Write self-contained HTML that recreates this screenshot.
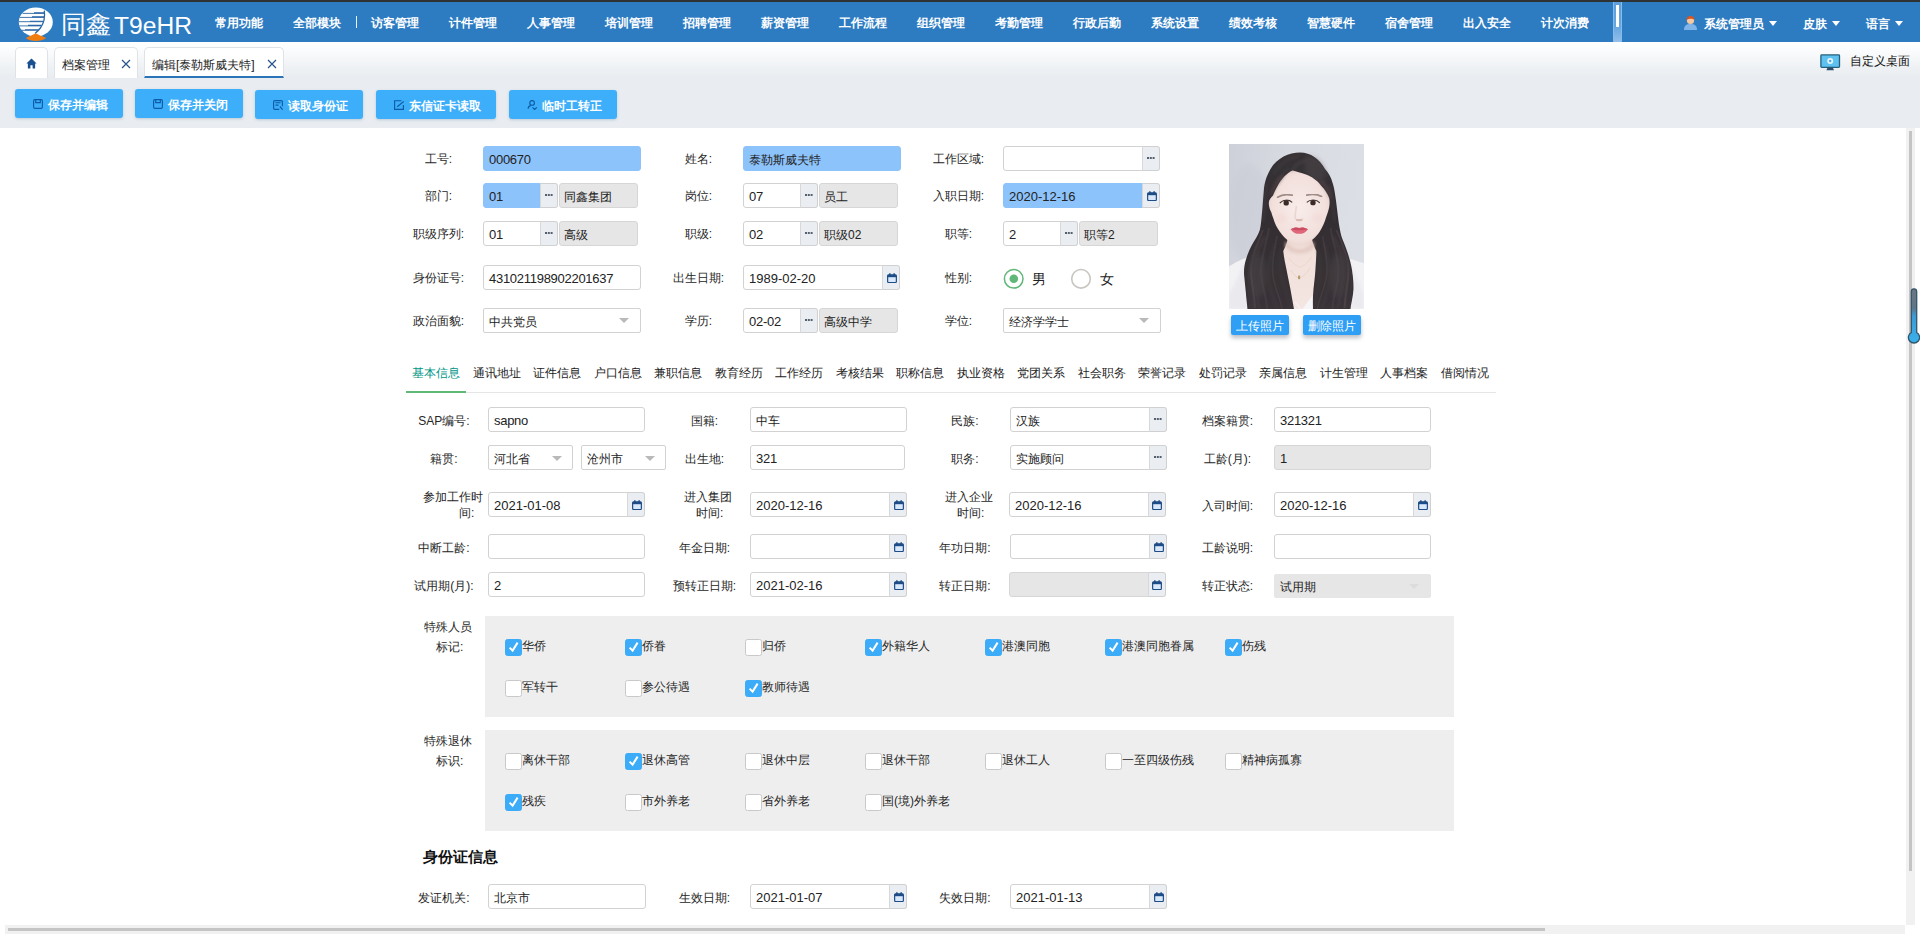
<!DOCTYPE html>
<html lang="zh"><head><meta charset="utf-8"><title>T9eHR</title>
<style>
*{box-sizing:border-box;margin:0;padding:0}
html,body{width:1920px;height:935px;overflow:hidden;background:#fff}
body{position:relative;font-family:"Liberation Sans",sans-serif;font-size:12px;color:#262626}
.a{position:absolute}
.t{position:absolute;white-space:nowrap;line-height:20px;height:20px}
.c{text-align:center}
.hdr{left:0;top:0;width:1920px;height:42px;background:#2d7cc2;border-top:2px solid #2e3232}
.nav{color:#fff;font-size:12px;font-weight:bold;top:12.5px;width:78px;text-align:center}
.strip{left:0;top:42px;width:1920px;height:86px;background:linear-gradient(#ffffff 0px,#fbfcfd 8px,#eef1f4 26px,#e9edf1 36px,#e9edf1 100%)}
.tab{top:47px;height:31px;background:#fff;border:1px solid #dfe3e7;border-bottom:none;border-radius:5px 5px 0 0}
.btn{height:29px;background:#3daef9;border-radius:3px;color:#fff;font-size:12px;font-weight:bold;box-shadow:0 1px 3px rgba(80,120,160,.3)}
.in{position:absolute;height:25px;border:1px solid #d2d2d2;border-radius:3px;background:#fff;font-size:12px;white-space:nowrap;overflow:hidden;color:#222}
.in span{position:absolute;left:5px;top:2px;line-height:21px;height:21px}
.blue{background:#8dc3fb;border-color:#8dc3fb}
.gray{background:#e6e6e6;border-color:#d6d6d6}
.pk{position:absolute;height:25px;width:18px;border:1px solid #d0d0d0;border-left:1px solid #d8d8d8;border-radius:0 3px 3px 0;background:#eaeef3}
.pk i{position:absolute;left:4px;top:10px;width:2px;height:2px;background:#55606c;box-shadow:2.8px 0 0 #55606c,5.6px 0 0 #55606c}
.cal{position:absolute;left:3.5px;top:7px;width:10px;height:10.4px}
.arr{position:absolute;width:0;height:0;border-left:5.5px solid transparent;border-right:5.5px solid transparent;border-top:5.5px solid #b9b9b9}
.n{font-size:13px;letter-spacing:-0.28px}
.d{font-size:13px}
.cb{position:absolute;width:17px;height:17px;border-radius:2.5px;background:#fff;border:1px solid #c9c9c9}
.cb.on{background:#3cacf8;border-color:#3cacf8}
.cb svg{position:absolute;left:1px;top:0px}
.panel{background:#eeeeee}
</style></head>
<body>
<div class="a hdr"></div>
<svg class="a" style="left:17px;top:5px" width="38" height="38" viewBox="0 0 38 38">
<defs><clipPath id="lg"><path d="M1.8 17.1 A17 14.5 0 0 1 27.4 5 C28.4 13 25 22 18 28.4 C10 34 1.8 27 1.8 17.1Z"/></clipPath></defs>
<path d="M18.6 28 L29 33 C25 37 12.5 37 9 33 Z" fill="#f07d10"/>
<ellipse cx="18.8" cy="17.1" rx="17" ry="14.5" fill="#fff"/>
<path d="M18.6 28.2 L28.6 33.2 C24 35 14 35 9.2 33.2 Z" fill="#f07d10"/>
<g clip-path="url(#lg)" stroke="#2a66a4" fill="none">
<path d="M0 8.4h30M0 12.4h30M0 16.7h30M0 20.9h30M0 25.3h30" stroke-width="0.9"/>
<path d="M17 7.9h13M15 11.9h15M13 16.2h15M11 20.4h15M8 24.8h15" stroke-width="1.1"/>
</g>
<path d="M27.3 5.6 C28.2 12 26.6 18.6 23.4 23 C21.8 25.2 20 26.8 18.2 28.2" fill="none" stroke="#2a66a4" stroke-width="1.3"/>
</svg>
<div class="t" style="left:60.5px;top:8px;height:32px;line-height:32px;font-size:25px;color:#fff">同鑫</div><div class="t" style="left:114px;top:9.5px;height:32px;line-height:32px;font-size:24.6px;color:#fff">T9eHR</div>
<div class="t nav" style="left:200px">常用功能</div>
<div class="t nav" style="left:278px">全部模块</div>
<div class="t nav" style="left:356px">访客管理</div>
<div class="t nav" style="left:434px">计件管理</div>
<div class="t nav" style="left:512px">人事管理</div>
<div class="t nav" style="left:590px">培训管理</div>
<div class="t nav" style="left:668px">招聘管理</div>
<div class="t nav" style="left:746px">薪资管理</div>
<div class="t nav" style="left:824px">工作流程</div>
<div class="t nav" style="left:902px">组织管理</div>
<div class="t nav" style="left:980px">考勤管理</div>
<div class="t nav" style="left:1058px">行政后勤</div>
<div class="t nav" style="left:1136px">系统设置</div>
<div class="t nav" style="left:1214px">绩效考核</div>
<div class="t nav" style="left:1292px">智慧硬件</div>
<div class="t nav" style="left:1370px">宿舍管理</div>
<div class="t nav" style="left:1448px">出入安全</div>
<div class="t nav" style="left:1526px">计次消费</div>
<div class="a" style="left:356px;top:16px;width:1px;height:12px;background:#e8f1fa"></div>
<div class="a" style="left:1613px;top:2px;width:9px;height:40px;background:linear-gradient(#5c9fdc,#65a6e0 60%,#94bfea);border-left:1px solid #86bbea;border-right:1px solid #86bbea"></div>
<div class="a" style="left:1616px;top:5px;width:3.4px;height:22px;background:#fff"></div>
<svg class="a" style="left:1683px;top:15px" width="15" height="16" viewBox="0 0 15 16">
<path d="M1 15 C1 10 4 9 7.5 9 C11 9 14 10 14 15 Z" fill="#7fb4ea"/>
<circle cx="7.5" cy="5.5" r="3.6" fill="#f7c9a0"/>
<path d="M3.6 5 C3.6 1.5 6 1 7.5 1 C9.5 1 11.6 2 11.4 5 C10 3.6 6 3.4 3.6 5Z" fill="#d9541e"/>
</svg>
<div class="t nav" style="left:1704px;width:60px;top:13.5px">系统管理员</div>
<div class="t nav" style="left:1803px;width:24px;top:13.5px">皮肤</div>
<div class="t nav" style="left:1866px;width:24px;top:13.5px">语言</div>
<div class="a" style="left:1769px;top:20.5px;width:0;height:0;border-left:4.5px solid transparent;border-right:4.5px solid transparent;border-top:5px solid #fff"></div>
<div class="a" style="left:1832px;top:20.5px;width:0;height:0;border-left:4.5px solid transparent;border-right:4.5px solid transparent;border-top:5px solid #fff"></div>
<div class="a" style="left:1895px;top:20.5px;width:0;height:0;border-left:4.5px solid transparent;border-right:4.5px solid transparent;border-top:5px solid #fff"></div>
<div class="a strip"></div>
<div class="a tab" style="left:15px;width:33px"></div>
<svg class="a" style="left:26px;top:58px" width="11" height="11" viewBox="0 0 13 12" preserveAspectRatio="none"><path d="M6.5 0.5 L12.5 6 H10.8 V11.5 H7.8 V8 H5.2 V11.5 H2.2 V6 H0.5 Z" fill="#1a4f92"/></svg>
<div class="a tab" style="left:54px;width:84px"></div>
<div class="t" style="left:62px;top:55px;color:#222">档案管理</div>
<div class="a tab" style="left:144px;width:140px;border-bottom:2px solid #2a74b8;height:31px"></div>
<div class="t" style="left:152px;top:55px;color:#222">编辑[泰勒斯威夫特]</div>
<svg class="a" style="left:121px;top:59px" width="10" height="10" viewBox="0 0 10 10"><path d="M1 1 L9 9 M9 1 L1 9" stroke="#28558f" stroke-width="1.2" fill="none"/></svg>
<svg class="a" style="left:267px;top:59px" width="10" height="10" viewBox="0 0 10 10"><path d="M1 1 L9 9 M9 1 L1 9" stroke="#28558f" stroke-width="1.2" fill="none"/></svg>
<svg class="a" style="left:1820px;top:54px" width="21" height="17" viewBox="0 0 21 17">
<rect x="0.9" y="0.9" width="18.6" height="12.4" rx="0.8" fill="#5ec1ef" stroke="#23607f" stroke-width="1.3"/>
<circle cx="10.2" cy="7" r="3" fill="#e4f5fd"/><circle cx="10.2" cy="7" r="1.2" fill="#4aa8d8"/>
<path d="M7.6 13.6 H12.8 L14 16.3 H6.4 Z" fill="#2f4c69"/>
</svg>
<div class="t" style="left:1850px;top:51px;color:#111">自定义桌面</div>
<div class="a btn" style="left:15px;top:88.5px;width:108px"></div>
<svg class="a" style="left:33.0px;top:99.0px" width="10" height="10" viewBox="0 0 10 10"><rect x=".6" y=".6" width="8.8" height="8.8" rx="1.3" fill="none" stroke="#0d5ca8" stroke-width="1.15"/><path d="M2.7 .6v3h4.6v-3" fill="none" stroke="#0d5ca8" stroke-width="1.15"/></svg>
<div class="t" style="left:48.0px;top:94.5px;color:#fff;font-weight:bold">保存并编辑</div>
<div class="a btn" style="left:135px;top:88.5px;width:108px"></div>
<svg class="a" style="left:153.0px;top:99.0px" width="10" height="10" viewBox="0 0 10 10"><rect x=".6" y=".6" width="8.8" height="8.8" rx="1.3" fill="none" stroke="#0d5ca8" stroke-width="1.15"/><path d="M2.7 .6v3h4.6v-3" fill="none" stroke="#0d5ca8" stroke-width="1.15"/></svg>
<div class="t" style="left:168.0px;top:94.5px;color:#fff;font-weight:bold">保存并关闭</div>
<div class="a btn" style="left:255px;top:89.5px;width:108px"></div>
<svg class="a" style="left:273.0px;top:100.0px" width="10" height="10" viewBox="0 0 10 10"><path d="M9.4 6.2V1.9a1.3 1.3 0 0 0-1.3-1.3H1.9A1.3 1.3 0 0 0 .6 1.9v6.2a1.3 1.3 0 0 0 1.3 1.3H6.2" fill="none" stroke="#0d5ca8" stroke-width="1.15"/><path d="M2.4 2.7h5.2M2.4 5.1h3.2" fill="none" stroke="#0d5ca8" stroke-width="1.15"/><path d="M6.9 6.5L9.7 9.7" fill="none" stroke="#0d5ca8" stroke-width="1.15" stroke-width="1.4"/></svg>
<div class="t" style="left:288.0px;top:95.5px;color:#fff;font-weight:bold">读取身份证</div>
<div class="a btn" style="left:376px;top:89.5px;width:120px"></div>
<svg class="a" style="left:394.0px;top:100.0px" width="10" height="10" viewBox="0 0 10 10"><path d="M7.4 .7H.6V9.4H9.4V5" fill="none" stroke="#0d5ca8" stroke-width="1.15"/><path d="M9.7 1.4L3.2 6.7" fill="none" stroke="#0d5ca8" stroke-width="1.15" stroke-width="1.3"/></svg>
<div class="t" style="left:409.0px;top:95.5px;color:#fff;font-weight:bold">东信证卡读取</div>
<div class="a btn" style="left:509px;top:89.5px;width:108px"></div>
<svg class="a" style="left:527.0px;top:100.0px" width="10" height="10" viewBox="0 0 10 10"><circle cx="5.1" cy="2.9" r="2.35" fill="none" stroke="#0d5ca8" stroke-width="1.15"/><path d="M1.1 8.8C1.1 6.9 2.3 6 3.7 5.6" fill="none" stroke="#0d5ca8" stroke-width="1.15"/><path d="M5.5 7.4L7.6 9.5L9.8 7.3" fill="none" stroke="#0d5ca8" stroke-width="1.15" stroke-width="1.3"/></svg>
<div class="t" style="left:542.0px;top:95.5px;color:#fff;font-weight:bold">临时工转正</div>
<div class="t c" style="left:378.5px;top:149px;width:120px">工号:</div>
<div class="in blue n" style="left:483px;top:146px;width:158px;"><span>000670</span></div>
<div class="t c" style="left:638.5px;top:149px;width:120px">姓名:</div>
<div class="in blue" style="left:743px;top:146px;width:158px;"><span style="top:3px;left:5px">泰勒斯威夫特</span></div>
<div class="t c" style="left:898.5px;top:149px;width:120px">工作区域:</div>
<div class="in " style="left:1003px;top:146px;width:140px;border-radius:3px 0 0 3px"></div><div class="pk" style="left:1142px;top:146px"><i></i></div>
<div class="t c" style="left:378.5px;top:186px;width:120px">部门:</div>
<div class="in blue n" style="left:483px;top:183px;width:58px;border-radius:3px 0 0 3px"><span>01</span></div><div class="pk" style="left:540px;top:183px"><i></i></div><div class="in gray" style="left:559px;top:183px;width:79px;"><span style="top:3px;left:4px">同鑫集团</span></div>
<div class="t c" style="left:638.5px;top:186px;width:120px">岗位:</div>
<div class="in  n" style="left:743px;top:183px;width:58px;border-radius:3px 0 0 3px"><span>07</span></div><div class="pk" style="left:800px;top:183px"><i></i></div><div class="in gray" style="left:819px;top:183px;width:79px;"><span style="top:3px;left:4px">员工</span></div>
<div class="t c" style="left:898.5px;top:186px;width:120px">入职日期:</div>
<div class="in blue d" style="left:1003px;top:183px;width:140px;border-radius:3px 0 0 3px"><span>2020-12-16</span></div><div class="pk" style="left:1142px;top:183px"><svg class="cal" viewBox="0 0 11 11"><rect x="0.7" y="1.8" width="9.6" height="8.5" rx="1.2" fill="#d9e9fb" stroke="#1d4c86" stroke-width="1.3"/><rect x="0.7" y="1.8" width="9.6" height="2.6" fill="#1d4c86"/><rect x="2.4" y="0" width="1.5" height="2.4" fill="#1d4c86"/><rect x="7.1" y="0" width="1.5" height="2.4" fill="#1d4c86"/></svg></div>
<div class="t c" style="left:378.5px;top:224px;width:120px">职级序列:</div>
<div class="in  n" style="left:483px;top:221px;width:58px;border-radius:3px 0 0 3px"><span>01</span></div><div class="pk" style="left:540px;top:221px"><i></i></div><div class="in gray" style="left:559px;top:221px;width:79px;"><span style="top:3px;left:4px">高级</span></div>
<div class="t c" style="left:638.5px;top:224px;width:120px">职级:</div>
<div class="in  n" style="left:743px;top:221px;width:58px;border-radius:3px 0 0 3px"><span>02</span></div><div class="pk" style="left:800px;top:221px"><i></i></div><div class="in gray" style="left:819px;top:221px;width:79px;"><span style="top:3px;left:4px">职级02</span></div>
<div class="t c" style="left:898.5px;top:224px;width:120px">职等:</div>
<div class="in  n" style="left:1003px;top:221px;width:58px;border-radius:3px 0 0 3px"><span>2</span></div><div class="pk" style="left:1060px;top:221px"><i></i></div><div class="in gray" style="left:1079px;top:221px;width:79px;"><span style="top:3px;left:4px">职等2</span></div>
<div class="t c" style="left:378.5px;top:268px;width:120px">身份证号:</div>
<div class="in  n" style="left:483px;top:265px;width:158px;"><span>431021198902201637</span></div>
<div class="t c" style="left:638.5px;top:268px;width:120px">出生日期:</div>
<div class="in  d" style="left:743px;top:265px;width:140px;border-radius:3px 0 0 3px"><span>1989-02-20</span></div><div class="pk" style="left:882px;top:265px"><svg class="cal" viewBox="0 0 11 11"><rect x="0.7" y="1.8" width="9.6" height="8.5" rx="1.2" fill="#d9e9fb" stroke="#1d4c86" stroke-width="1.3"/><rect x="0.7" y="1.8" width="9.6" height="2.6" fill="#1d4c86"/><rect x="2.4" y="0" width="1.5" height="2.4" fill="#1d4c86"/><rect x="7.1" y="0" width="1.5" height="2.4" fill="#1d4c86"/></svg></div>
<div class="t c" style="left:898.5px;top:268px;width:120px">性别:</div>
<svg class="a" style="left:1000px;top:265px" width="120" height="28" viewBox="0 0 120 28"><circle cx="13.7" cy="13.8" r="9.3" fill="#fff" stroke="#5fb878" stroke-width="1.5"/><circle cx="13.8" cy="13.8" r="4.3" fill="#5fb878"/><circle cx="81" cy="13.8" r="9.3" fill="#fff" stroke="#c9c6c1" stroke-width="1.6"/></svg>
<div class="t" style="left:1032px;top:269px;font-size:14px;color:#222">男</div>
<div class="t" style="left:1100px;top:269px;font-size:14px;color:#222">女</div>
<div class="t c" style="left:378.5px;top:311px;width:120px">政治面貌:</div>
<div class="in " style="left:483px;top:308px;width:158px;border-radius:2px;"><span style="top:3px;left:5px">中共党员</span></div><div class="arr" style="left:619px;top:318px;border-top-color:#b9b9b9"></div>
<div class="t c" style="left:638.5px;top:311px;width:120px">学历:</div>
<div class="in  n" style="left:743px;top:308px;width:58px;border-radius:3px 0 0 3px"><span>02-02</span></div><div class="pk" style="left:800px;top:308px"><i></i></div><div class="in gray" style="left:819px;top:308px;width:79px;"><span style="top:3px;left:4px">高级中学</span></div>
<div class="t c" style="left:898.5px;top:311px;width:120px">学位:</div>
<div class="in " style="left:1003px;top:308px;width:158px;border-radius:2px;"><span style="top:3px;left:5px">经济学学士</span></div><div class="arr" style="left:1139px;top:318px;border-top-color:#b9b9b9"></div>
<svg class="a" style="left:1229px;top:144px" width="135" height="165" viewBox="0 0 135 165">
<defs>
<linearGradient id="pbg" x1="0" y1="0" x2="1" y2="0.25"><stop offset="0" stop-color="#cdd0d9"/><stop offset="0.45" stop-color="#d9dbe2"/><stop offset="1" stop-color="#dddfe6"/></linearGradient>
<radialGradient id="face" cx="0.5" cy="0.5" r="0.62"><stop offset="0" stop-color="#f8ecea"/><stop offset="0.7" stop-color="#f2e0dc"/><stop offset="1" stop-color="#e3c9c3"/></radialGradient>
<linearGradient id="hair" x1="0" y1="0" x2="0" y2="1"><stop offset="0" stop-color="#373135"/><stop offset="0.45" stop-color="#332d31"/><stop offset="1" stop-color="#3a3438"/></linearGradient>
<linearGradient id="chest" x1="0" y1="0" x2="0" y2="1"><stop offset="0" stop-color="#e6cdc6"/><stop offset="0.18" stop-color="#f1dfda"/><stop offset="1" stop-color="#f4e6e2"/></linearGradient>
<filter id="b1" x="-10%" y="-10%" width="120%" height="120%"><feGaussianBlur stdDeviation="0.7"/></filter>
<filter id="b2" x="-20%" y="-20%" width="140%" height="140%"><feGaussianBlur stdDeviation="1.4"/></filter>
<filter id="b3" x="-30%" y="-30%" width="160%" height="160%"><feGaussianBlur stdDeviation="2.5"/></filter>
<clipPath id="pc"><rect width="135" height="165"/></clipPath>
</defs>
<g clip-path="url(#pc)">
<rect width="135" height="165" fill="url(#pbg)"/>
<ellipse cx="20" cy="70" rx="22" ry="50" fill="#c9ccd6" opacity=".5" filter="url(#b3)"/>
<!-- clothes -->
<path d="M-2 124 C6 118 14 114.5 24 112 L112 113 C120 114.5 128 116.5 137 120 V167 H-2Z" fill="#f2f1f4" filter="url(#b1)"/>
<path d="M0 150 C6 140 10 130 16 118 L20 140 L18 165 H0Z" fill="#e4e3ea" opacity=".55" filter="url(#b2)"/>
<path d="M135 150 C130 140 126 130 122 120 L120 140 L122 165 H135Z" fill="#e4e3ea" opacity=".45" filter="url(#b2)"/>
<!-- hair mass -->
<path d="M71 8.6 C60 8.6 48 14 41.5 25 C37 33 35.4 39 34.8 47 C34 56 33.6 64 32.6 73 C32 79 31.6 83 30.8 86 C29 91 27 94 24.6 98 C21 104 18.6 110 16.8 116 C15 122 14.6 128 15.4 134 C16 140 16.4 144 16.8 148 C17.2 154 18 159 18.6 167 H121 C122 160 124 153 124.4 146 C124.8 139 123.8 132 123 126 C122.4 122 121.6 119 120.8 116 C119 109 116.6 103 114.2 97 C112.6 93 111.6 90 111 86 C110.2 82 109.6 78 109 73 C108 65 107.4 59 106.6 54 C105.8 48 105 43 103.6 39 C102 33 99.6 29 96 25 C90 15 82 8.6 71 8.6Z" fill="url(#hair)" filter="url(#b1)"/>
<ellipse cx="86" cy="26" rx="9" ry="14" fill="#5a5257" opacity=".35" transform="rotate(-28 86 26)" filter="url(#b3)"/>
<ellipse cx="30" cy="132" rx="7" ry="22" fill="#554d52" opacity=".35" filter="url(#b3)"/>
<ellipse cx="108" cy="132" rx="7" ry="22" fill="#554d52" opacity=".35" filter="url(#b3)"/>
<!-- chest / neck -->
<path d="M59.5 90 C58.6 96 57.4 101.5 54.2 107 C55 114 56.4 120 57.6 126 C58.8 132 60.2 139 61.4 145 C62.6 152 64 159 65.3 167 H83 C83.4 160 84 152 84.5 145 C85.2 139 86 132 86.4 126 C86.8 120 87.4 112 87.4 107 C84.4 101.5 83 96 82 90Z" fill="url(#chest)" filter="url(#b1)"/>
<!-- collar V -->
<path d="M83.6 151.5 L72.6 166 H84Z" fill="#f6f5f7" filter="url(#b1)"/>
<path d="M66 158 L73 166" stroke="#f6f5f7" stroke-width="1" filter="url(#b1)"/>
<!-- face -->
<path d="M63.5 26.5 C58 29 52 35 48.6 42 C46.4 46 45 49 44 51.5 C41.6 54 39.6 56 39.8 59.5 C40 63 41 66 42.4 68.5 C43 71 43.6 72 44.2 74 C45.6 79 48 84 51 88 C53.4 91.4 55.4 93.6 57.8 95.6 C61.4 98.8 65.6 101.4 70.4 101.4 C75.4 101.4 80 98.6 83.6 95.6 C86.4 93 88.8 90.4 90.8 87.4 C93.6 83 95.8 78 97 73.4 C98 70.6 99.4 67 100.2 63 C100.8 60 100.8 57 100.2 54 C98.4 49.6 96 45.6 92.4 42 C88 36 82 32.4 77 30.6 C72 28.8 67 27.4 63.5 26.5Z" fill="url(#face)" filter="url(#b1)"/>
<!-- under-chin shadow -->
<path d="M56.5 97 C61 102.5 66 105 70.5 105 C75.5 105 80.5 102.5 84.8 97 L85.6 103 C81 108 76 109.6 70.5 109.6 C65 109.6 60 107.6 55.6 102.6Z" fill="#dfc3bb" opacity=".7" filter="url(#b2)"/>
<!-- hair shadow on forehead sides -->
<path d="M44 51 C46.5 45 50 38 56 32 L52 31 C46 36 42 44 40.5 52Z" fill="#6a585a" opacity=".35" filter="url(#b2)"/>
<path d="M100 54 C98 48 95 43 90 38 L94 36.5 C99 41 102 47 103.4 54Z" fill="#6a585a" opacity=".35" filter="url(#b2)"/>
<!-- cheek blush -->
<ellipse cx="52.5" cy="74" rx="5.5" ry="4.5" fill="#f2cfcf" opacity=".28" filter="url(#b2)"/>
<ellipse cx="88" cy="74" rx="5.5" ry="4.5" fill="#f2cfcf" opacity=".28" filter="url(#b2)"/>
<!-- eyebrows -->
<path d="M48.6 53.2 C52.4 50.6 58 50 63.2 51.2" stroke="#7d6762" stroke-width="1.7" fill="none" stroke-linecap="round" opacity=".7" filter="url(#b1)"/>
<path d="M77.8 51.2 C83 50 88.6 50.4 92.6 52.6" stroke="#7d6762" stroke-width="1.7" fill="none" stroke-linecap="round" opacity=".7" filter="url(#b1)"/>
<!-- eyes -->
<path d="M51.4 59.4 C53.6 56.2 59.6 55.8 62.6 58.8 C60 62 54.2 62.2 51.4 59.4Z" fill="#f3ebea" filter="url(#b1)"/>
<path d="M78.4 58.8 C81.2 55.6 87.4 55.8 90 59 C87 62 81.2 62 78.4 58.8Z" fill="#f3ebea" filter="url(#b1)"/>
<ellipse cx="57.2" cy="58.9" rx="2.7" ry="2.6" fill="#3b2926" filter="url(#b1)"/>
<ellipse cx="84" cy="58.7" rx="2.7" ry="2.6" fill="#3b2926" filter="url(#b1)"/>
<path d="M50.8 59.2 C53.6 55.4 60 55.2 63.2 58.4" stroke="#33221f" stroke-width="1.1" fill="none" opacity=".9" filter="url(#b1)"/>
<path d="M77.8 58.4 C81 55 87.6 55.2 90.8 58.8" stroke="#33221f" stroke-width="1.1" fill="none" opacity=".9" filter="url(#b1)"/>
<!-- nose -->
<path d="M67.4 62 C66.6 68 65.8 71.6 66.2 74.4 C67.6 76.6 72.8 76.6 74 74.4" stroke="#e3c6bf" stroke-width="1.6" fill="none" opacity=".55" filter="url(#b1)"/>
<ellipse cx="70.2" cy="76.2" rx="3.4" ry="1.1" fill="#c9a097" opacity=".55" filter="url(#b1)"/>
<!-- lips -->
<path d="M61.6 85.2 C64.8 83.4 68 83 70.2 84 C72.4 83 75.6 83.4 79 85.2 C76.4 88.8 73.6 89.8 70.2 89.8 C66.8 89.8 64.2 88.8 61.6 85.2Z" fill="#e0667a" filter="url(#b1)"/>
<path d="M61.6 85.2 C64.8 83.4 68 83 70.2 84 C72.4 83 75.6 83.4 79 85.2 C75.6 86 73 86.2 70.2 86.2 C67.4 86.2 65 86 61.6 85.2Z" fill="#c4485c" opacity=".8" filter="url(#b1)"/>
<!-- hair highlights -->
<path d="M63 27 C66 21 72 17 80 15" stroke="#5b5257" stroke-width="1.6" fill="none" opacity=".55" filter="url(#b2)"/>
<path d="M60 24 C56 28 52 33 49 39" stroke="#4c4448" stroke-width="1.6" fill="none" opacity=".5" filter="url(#b2)"/>
<path d="M36 92 C30 104 24 116 24 130 C24 142 28 152 30 164" stroke="#4d4549" stroke-width="2.4" fill="none" opacity=".55" filter="url(#b2)"/>
<path d="M46 100 C42 112 38 124 40 138 C41 148 46 156 48 165" stroke="#484045" stroke-width="2" fill="none" opacity=".5" filter="url(#b2)"/>
<path d="M104 92 C110 104 115 116 115 130 C115 142 111 152 109 164" stroke="#4d4549" stroke-width="2.4" fill="none" opacity=".55" filter="url(#b2)"/>
<path d="M95 100 C99 112 102 124 100 138 C99 148 95 156 93 165" stroke="#484045" stroke-width="2" fill="none" opacity=".5" filter="url(#b2)"/>
<path d="M28 100 C24 110 20 120 21 132 C22 140 24 150 24 164" stroke="#5a5156" stroke-width="1.6" fill="none" opacity=".45" filter="url(#b2)"/>
<path d="M52 104 C50 116 50 126 54 138 C57 148 60 156 61 165" stroke="#3f373b" stroke-width="2.4" fill="none" opacity=".6" filter="url(#b2)"/>
<path d="M112 100 C116 110 119 120 119 132 C118 142 116 152 116 164" stroke="#5a5156" stroke-width="1.6" fill="none" opacity=".45" filter="url(#b2)"/>
<path d="M89 104 C91 116 92 126 90 138 C88 148 86 156 86 165" stroke="#3f373b" stroke-width="2.4" fill="none" opacity=".6" filter="url(#b2)"/>
<path d="M38 40 C36 52 36 64 34 78" stroke="#4a4246" stroke-width="1.8" fill="none" opacity=".5" filter="url(#b2)"/>
<path d="M101 40 C103 52 104 64 106 78" stroke="#4a4246" stroke-width="1.8" fill="none" opacity=".5" filter="url(#b2)"/>
<path d="M70 12 C60 14 50 20 45 30" stroke="#4f474c" stroke-width="1.4" fill="none" opacity=".45" filter="url(#b2)"/>
<path d="M76 12 C86 15 94 22 98 32" stroke="#4f474c" stroke-width="1.4" fill="none" opacity=".45" filter="url(#b2)"/>
<path d="M70 17 C78 18 88 24 93 34" stroke="#453d42" stroke-width="1.6" fill="none" opacity=".5" filter="url(#b2)"/>
<path d="M34 86 C30 96 24 108 22 122 C21 134 25 146 26 164" stroke="#5c5459" stroke-width="1.8" fill="none" opacity="0.38" filter="url(#b1)"/>
<path d="M107.5 86 C111.5 96 117.5 108 119.5 122 C120.5 134 116.5 146 115.5 164" stroke="#5c5459" stroke-width="1.8" fill="none" opacity="0.38" filter="url(#b1)"/>
<path d="M40 84 C38 98 32 112 32 128 C32 142 38 152 38 165" stroke="#4f474c" stroke-width="2.2" fill="none" opacity="0.42" filter="url(#b1)"/>
<path d="M101.5 84 C103.5 98 109.5 112 109.5 128 C109.5 142 103.5 152 103.5 165" stroke="#4f474c" stroke-width="2.2" fill="none" opacity="0.42" filter="url(#b1)"/>
<path d="M48 92 C46 104 42 118 44 132 C46 146 52 156 53 165" stroke="#564e53" stroke-width="1.6" fill="none" opacity="0.36" filter="url(#b1)"/>
<path d="M93.5 92 C95.5 104 99.5 118 97.5 132 C95.5 146 89.5 156 88.5 165" stroke="#564e53" stroke-width="1.6" fill="none" opacity="0.36" filter="url(#b1)"/>
<path d="M29 100 C25 110 19 122 19 136 C19 146 21 156 21 165" stroke="#3f373c" stroke-width="2.0" fill="none" opacity="0.5" filter="url(#b1)"/>
<path d="M112.5 100 C116.5 110 122.5 122 122.5 136 C122.5 146 120.5 156 120.5 165" stroke="#3f373c" stroke-width="2.0" fill="none" opacity="0.5" filter="url(#b1)"/>
<!-- necklace -->
<path d="M60 114 C64 120 68 122.5 70.6 123 C74 122.5 78 120 82.6 113" stroke="#e6cdb8" stroke-width=".6" fill="none" opacity=".8"/>
<path d="M61.6 126 C65 131 68 133.6 70 134.4 C73 133.6 77 130 81.4 124" stroke="#e2c6ae" stroke-width=".6" fill="none" opacity=".8"/>
<rect x="69" y="131.6" width="2.2" height="3.6" rx=".8" fill="#b89b6e" filter="url(#b1)"/>
</g>
</svg>
<div class="a" style="left:1231px;top:315px;width:58px;height:20px;background:#2f9ff6;border-radius:2px;box-shadow:0 3px 4px rgba(60,70,90,.35)"></div>
<div class="t c" style="left:1231px;top:316px;width:58px;color:#fff;font-size:12px">上传照片</div>
<div class="a" style="left:1303px;top:315px;width:58px;height:20px;background:#2f9ff6;border-radius:2px;box-shadow:0 3px 4px rgba(60,70,90,.35)"></div>
<div class="t c" style="left:1303px;top:316px;width:58px;color:#fff;font-size:12px">删除照片</div>
<div class="t" style="left:412.0px;top:362.5px;color:#009688">基本信息</div>
<div class="t" style="left:472.5px;top:362.5px;color:#222">通讯地址</div>
<div class="t" style="left:533.0px;top:362.5px;color:#222">证件信息</div>
<div class="t" style="left:593.5px;top:362.5px;color:#222">户口信息</div>
<div class="t" style="left:654.0px;top:362.5px;color:#222">兼职信息</div>
<div class="t" style="left:714.5px;top:362.5px;color:#222">教育经历</div>
<div class="t" style="left:775.0px;top:362.5px;color:#222">工作经历</div>
<div class="t" style="left:835.5px;top:362.5px;color:#222">考核结果</div>
<div class="t" style="left:896.0px;top:362.5px;color:#222">职称信息</div>
<div class="t" style="left:956.5px;top:362.5px;color:#222">执业资格</div>
<div class="t" style="left:1017.0px;top:362.5px;color:#222">党团关系</div>
<div class="t" style="left:1077.5px;top:362.5px;color:#222">社会职务</div>
<div class="t" style="left:1138.0px;top:362.5px;color:#222">荣誉记录</div>
<div class="t" style="left:1198.5px;top:362.5px;color:#222">处罚记录</div>
<div class="t" style="left:1259.0px;top:362.5px;color:#222">亲属信息</div>
<div class="t" style="left:1319.5px;top:362.5px;color:#222">计生管理</div>
<div class="t" style="left:1380.0px;top:362.5px;color:#222">人事档案</div>
<div class="t" style="left:1440.5px;top:362.5px;color:#222">借阅情况</div>
<div class="a" style="left:406px;top:392px;width:1090px;height:1px;background:#e6e6e6"></div>
<div class="a" style="left:406px;top:391px;width:60px;height:2px;background:#5fb878"></div>
<div class="t c" style="left:384.0px;top:411px;width:120px">SAP编号:</div>
<div class="in  n" style="left:488px;top:407px;width:157px;"><span>sapno</span></div>
<div class="t c" style="left:644.5px;top:411px;width:120px">国籍:</div>
<div class="in " style="left:750px;top:407px;width:157px;"><span style="top:3px;left:5px">中车</span></div>
<div class="t c" style="left:905.0px;top:411px;width:120px">民族:</div>
<div class="in " style="left:1010px;top:407px;width:140px;border-radius:3px 0 0 3px"><span style="top:3px;left:5px">汉族</span></div><div class="pk" style="left:1149px;top:407px"><i></i></div>
<div class="t c" style="left:1167.5px;top:411px;width:120px">档案籍贯:</div>
<div class="in  n" style="left:1274px;top:407px;width:157px;"><span>321321</span></div>
<div class="t c" style="left:384.0px;top:449px;width:120px">籍贯:</div>
<div class="in " style="left:488px;top:445px;width:85px;border-radius:2px;"><span style="top:3px;left:5px">河北省</span></div><div class="arr" style="left:552px;top:456.4px;border-top-color:#b9b9b9"></div>
<div class="in " style="left:581px;top:445px;width:85px;border-radius:2px;"><span style="top:3px;left:5px">沧州市</span></div><div class="arr" style="left:645px;top:456.4px;border-top-color:#b9b9b9"></div>
<div class="t c" style="left:644.5px;top:449px;width:120px">出生地:</div>
<div class="in  n" style="left:750px;top:445px;width:155px;"><span>321</span></div>
<div class="t c" style="left:905.0px;top:449px;width:120px">职务:</div>
<div class="in " style="left:1010px;top:445px;width:140px;border-radius:3px 0 0 3px"><span style="top:3px;left:5px">实施顾问</span></div><div class="pk" style="left:1149px;top:445px"><i></i></div>
<div class="t c" style="left:1167.5px;top:449px;width:120px">工龄(月):</div>
<div class="in gray n" style="left:1274px;top:445px;width:157px;"><span>1</span></div>
<div class="t" style="left:423px;top:489px;line-height:16px;height:16px">参加工作时</div><div class="t" style="left:459px;top:505px;line-height:16px;height:16px">间:</div>
<div class="in  d" style="left:488px;top:492px;width:140px;border-radius:3px 0 0 3px"><span>2021-01-08</span></div><div class="pk" style="left:627px;top:492px"><svg class="cal" viewBox="0 0 11 11"><rect x="0.7" y="1.8" width="9.6" height="8.5" rx="1.2" fill="#d9e9fb" stroke="#1d4c86" stroke-width="1.3"/><rect x="0.7" y="1.8" width="9.6" height="2.6" fill="#1d4c86"/><rect x="2.4" y="0" width="1.5" height="2.4" fill="#1d4c86"/><rect x="7.1" y="0" width="1.5" height="2.4" fill="#1d4c86"/></svg></div>
<div class="t" style="left:684px;top:489px;line-height:16px;height:16px">进入集团</div><div class="t" style="left:696px;top:505px;line-height:16px;height:16px">时间:</div>
<div class="in  d" style="left:750px;top:492px;width:140px;border-radius:3px 0 0 3px"><span>2020-12-16</span></div><div class="pk" style="left:889px;top:492px"><svg class="cal" viewBox="0 0 11 11"><rect x="0.7" y="1.8" width="9.6" height="8.5" rx="1.2" fill="#d9e9fb" stroke="#1d4c86" stroke-width="1.3"/><rect x="0.7" y="1.8" width="9.6" height="2.6" fill="#1d4c86"/><rect x="2.4" y="0" width="1.5" height="2.4" fill="#1d4c86"/><rect x="7.1" y="0" width="1.5" height="2.4" fill="#1d4c86"/></svg></div>
<div class="t" style="left:945px;top:489px;line-height:16px;height:16px">进入企业</div><div class="t" style="left:957px;top:505px;line-height:16px;height:16px">时间:</div>
<div class="in  d" style="left:1009px;top:492px;width:139.5px;border-radius:3px 0 0 3px"><span>2020-12-16</span></div><div class="pk" style="left:1147.5px;top:492px"><svg class="cal" viewBox="0 0 11 11"><rect x="0.7" y="1.8" width="9.6" height="8.5" rx="1.2" fill="#d9e9fb" stroke="#1d4c86" stroke-width="1.3"/><rect x="0.7" y="1.8" width="9.6" height="2.6" fill="#1d4c86"/><rect x="2.4" y="0" width="1.5" height="2.4" fill="#1d4c86"/><rect x="7.1" y="0" width="1.5" height="2.4" fill="#1d4c86"/></svg></div>
<div class="t c" style="left:1167.5px;top:496px;width:120px">入司时间:</div>
<div class="in  d" style="left:1274px;top:492px;width:140px;border-radius:3px 0 0 3px"><span>2020-12-16</span></div><div class="pk" style="left:1413px;top:492px"><svg class="cal" viewBox="0 0 11 11"><rect x="0.7" y="1.8" width="9.6" height="8.5" rx="1.2" fill="#d9e9fb" stroke="#1d4c86" stroke-width="1.3"/><rect x="0.7" y="1.8" width="9.6" height="2.6" fill="#1d4c86"/><rect x="2.4" y="0" width="1.5" height="2.4" fill="#1d4c86"/><rect x="7.1" y="0" width="1.5" height="2.4" fill="#1d4c86"/></svg></div>
<div class="t c" style="left:384.0px;top:538px;width:120px">中断工龄:</div>
<div class="in " style="left:488px;top:534px;width:157px;"></div>
<div class="t c" style="left:644.5px;top:538px;width:120px">年金日期:</div>
<div class="in " style="left:750px;top:534px;width:140px;border-radius:3px 0 0 3px"></div><div class="pk" style="left:889px;top:534px"><svg class="cal" viewBox="0 0 11 11"><rect x="0.7" y="1.8" width="9.6" height="8.5" rx="1.2" fill="#d9e9fb" stroke="#1d4c86" stroke-width="1.3"/><rect x="0.7" y="1.8" width="9.6" height="2.6" fill="#1d4c86"/><rect x="2.4" y="0" width="1.5" height="2.4" fill="#1d4c86"/><rect x="7.1" y="0" width="1.5" height="2.4" fill="#1d4c86"/></svg></div>
<div class="t c" style="left:905.0px;top:538px;width:120px">年功日期:</div>
<div class="in " style="left:1010px;top:534px;width:140px;border-radius:3px 0 0 3px"></div><div class="pk" style="left:1149px;top:534px"><svg class="cal" viewBox="0 0 11 11"><rect x="0.7" y="1.8" width="9.6" height="8.5" rx="1.2" fill="#d9e9fb" stroke="#1d4c86" stroke-width="1.3"/><rect x="0.7" y="1.8" width="9.6" height="2.6" fill="#1d4c86"/><rect x="2.4" y="0" width="1.5" height="2.4" fill="#1d4c86"/><rect x="7.1" y="0" width="1.5" height="2.4" fill="#1d4c86"/></svg></div>
<div class="t c" style="left:1167.5px;top:538px;width:120px">工龄说明:</div>
<div class="in " style="left:1274px;top:534px;width:157px;"></div>
<div class="t c" style="left:384.0px;top:576px;width:120px">试用期(月):</div>
<div class="in  n" style="left:488px;top:572px;width:157px;"><span>2</span></div>
<div class="t c" style="left:644.5px;top:576px;width:120px">预转正日期:</div>
<div class="in  d" style="left:750px;top:572px;width:140px;border-radius:3px 0 0 3px"><span>2021-02-16</span></div><div class="pk" style="left:889px;top:572px"><svg class="cal" viewBox="0 0 11 11"><rect x="0.7" y="1.8" width="9.6" height="8.5" rx="1.2" fill="#d9e9fb" stroke="#1d4c86" stroke-width="1.3"/><rect x="0.7" y="1.8" width="9.6" height="2.6" fill="#1d4c86"/><rect x="2.4" y="0" width="1.5" height="2.4" fill="#1d4c86"/><rect x="7.1" y="0" width="1.5" height="2.4" fill="#1d4c86"/></svg></div>
<div class="t c" style="left:905.0px;top:576px;width:120px">转正日期:</div>
<div class="in gray" style="left:1009px;top:572px;width:139.5px;border-radius:3px 0 0 3px"></div><div class="pk" style="left:1147.5px;top:572px"><svg class="cal" viewBox="0 0 11 11"><rect x="0.7" y="1.8" width="9.6" height="8.5" rx="1.2" fill="#d9e9fb" stroke="#1d4c86" stroke-width="1.3"/><rect x="0.7" y="1.8" width="9.6" height="2.6" fill="#1d4c86"/><rect x="2.4" y="0" width="1.5" height="2.4" fill="#1d4c86"/><rect x="7.1" y="0" width="1.5" height="2.4" fill="#1d4c86"/></svg></div>
<div class="t c" style="left:1167.5px;top:576px;width:120px">转正状态:</div>
<div class="in gray" style="left:1274px;top:574px;width:157px;border-radius:2px;border-color:#e6e6e6;height:24px;"><span>试用期</span></div><div class="arr" style="left:1409px;top:584px;border-top-color:#dcdcdc"></div>
<div class="a panel" style="left:485px;top:616px;width:969px;height:100.5px"></div>
<div class="t" style="left:424px;top:617px">特殊人员</div><div class="t" style="left:436px;top:637px">标记:</div>
<div class="cb on" style="left:505px;top:639px"><svg width="13" height="13" viewBox="0 0 13 13"><path d="M2.6 7.6 L5.6 10.6 L10.6 2.6" fill="none" stroke="#fff" stroke-width="2"/></svg></div><div class="t" style="left:522px;top:636px">华侨</div>
<div class="cb on" style="left:625px;top:639px"><svg width="13" height="13" viewBox="0 0 13 13"><path d="M2.6 7.6 L5.6 10.6 L10.6 2.6" fill="none" stroke="#fff" stroke-width="2"/></svg></div><div class="t" style="left:642px;top:636px">侨眷</div>
<div class="cb" style="left:745px;top:639px"></div><div class="t" style="left:762px;top:636px">归侨</div>
<div class="cb on" style="left:865px;top:639px"><svg width="13" height="13" viewBox="0 0 13 13"><path d="M2.6 7.6 L5.6 10.6 L10.6 2.6" fill="none" stroke="#fff" stroke-width="2"/></svg></div><div class="t" style="left:882px;top:636px">外籍华人</div>
<div class="cb on" style="left:985px;top:639px"><svg width="13" height="13" viewBox="0 0 13 13"><path d="M2.6 7.6 L5.6 10.6 L10.6 2.6" fill="none" stroke="#fff" stroke-width="2"/></svg></div><div class="t" style="left:1002px;top:636px">港澳同胞</div>
<div class="cb on" style="left:1105px;top:639px"><svg width="13" height="13" viewBox="0 0 13 13"><path d="M2.6 7.6 L5.6 10.6 L10.6 2.6" fill="none" stroke="#fff" stroke-width="2"/></svg></div><div class="t" style="left:1122px;top:636px">港澳同胞眷属</div>
<div class="cb on" style="left:1225px;top:639px"><svg width="13" height="13" viewBox="0 0 13 13"><path d="M2.6 7.6 L5.6 10.6 L10.6 2.6" fill="none" stroke="#fff" stroke-width="2"/></svg></div><div class="t" style="left:1242px;top:636px">伤残</div>
<div class="cb" style="left:505px;top:680px"></div><div class="t" style="left:522px;top:677px">军转干</div>
<div class="cb" style="left:625px;top:680px"></div><div class="t" style="left:642px;top:677px">参公待遇</div>
<div class="cb on" style="left:745px;top:680px"><svg width="13" height="13" viewBox="0 0 13 13"><path d="M2.6 7.6 L5.6 10.6 L10.6 2.6" fill="none" stroke="#fff" stroke-width="2"/></svg></div><div class="t" style="left:762px;top:677px">教师待遇</div>
<div class="a panel" style="left:485px;top:730px;width:969px;height:101px"></div>
<div class="t" style="left:424px;top:731px">特殊退休</div><div class="t" style="left:436px;top:751px">标识:</div>
<div class="cb" style="left:505px;top:753px"></div><div class="t" style="left:522px;top:750px">离休干部</div>
<div class="cb on" style="left:625px;top:753px"><svg width="13" height="13" viewBox="0 0 13 13"><path d="M2.6 7.6 L5.6 10.6 L10.6 2.6" fill="none" stroke="#fff" stroke-width="2"/></svg></div><div class="t" style="left:642px;top:750px">退休高管</div>
<div class="cb" style="left:745px;top:753px"></div><div class="t" style="left:762px;top:750px">退休中层</div>
<div class="cb" style="left:865px;top:753px"></div><div class="t" style="left:882px;top:750px">退休干部</div>
<div class="cb" style="left:985px;top:753px"></div><div class="t" style="left:1002px;top:750px">退休工人</div>
<div class="cb" style="left:1105px;top:753px"></div><div class="t" style="left:1122px;top:750px">一至四级伤残</div>
<div class="cb" style="left:1225px;top:753px"></div><div class="t" style="left:1242px;top:750px">精神病孤寡</div>
<div class="cb on" style="left:505px;top:794px"><svg width="13" height="13" viewBox="0 0 13 13"><path d="M2.6 7.6 L5.6 10.6 L10.6 2.6" fill="none" stroke="#fff" stroke-width="2"/></svg></div><div class="t" style="left:522px;top:791px">残疾</div>
<div class="cb" style="left:625px;top:794px"></div><div class="t" style="left:642px;top:791px">市外养老</div>
<div class="cb" style="left:745px;top:794px"></div><div class="t" style="left:762px;top:791px">省外养老</div>
<div class="cb" style="left:865px;top:794px"></div><div class="t" style="left:882px;top:791px">国(境)外养老</div>
<div class="t" style="left:423px;top:847px;font-size:11pt;font-weight:bold;color:#111">身份证信息</div>
<div class="t c" style="left:384.0px;top:888px;width:120px">发证机关:</div>
<div class="in " style="left:488px;top:884px;width:158px;"><span style="top:3px;left:5px">北京市</span></div>
<div class="t c" style="left:644.5px;top:888px;width:120px">生效日期:</div>
<div class="in  d" style="left:750px;top:884px;width:140px;border-radius:3px 0 0 3px"><span>2021-01-07</span></div><div class="pk" style="left:889px;top:884px"><svg class="cal" viewBox="0 0 11 11"><rect x="0.7" y="1.8" width="9.6" height="8.5" rx="1.2" fill="#d9e9fb" stroke="#1d4c86" stroke-width="1.3"/><rect x="0.7" y="1.8" width="9.6" height="2.6" fill="#1d4c86"/><rect x="2.4" y="0" width="1.5" height="2.4" fill="#1d4c86"/><rect x="7.1" y="0" width="1.5" height="2.4" fill="#1d4c86"/></svg></div>
<div class="t c" style="left:905.0px;top:888px;width:120px">失效日期:</div>
<div class="in  d" style="left:1010px;top:884px;width:140px;border-radius:3px 0 0 3px"><span>2021-01-13</span></div><div class="pk" style="left:1149px;top:884px"><svg class="cal" viewBox="0 0 11 11"><rect x="0.7" y="1.8" width="9.6" height="8.5" rx="1.2" fill="#d9e9fb" stroke="#1d4c86" stroke-width="1.3"/><rect x="0.7" y="1.8" width="9.6" height="2.6" fill="#1d4c86"/><rect x="2.4" y="0" width="1.5" height="2.4" fill="#1d4c86"/><rect x="7.1" y="0" width="1.5" height="2.4" fill="#1d4c86"/></svg></div>
<div class="a" style="left:1906px;top:128px;width:9px;height:797px;background:#f1f1f1"></div>
<div class="a" style="left:1909px;top:131px;width:3px;height:740px;background:#c4c4c4"></div>
<div class="a" style="left:5px;top:925px;width:1900px;height:9px;background:#f1f1f1"></div>
<div class="a" style="left:8px;top:928px;width:1537px;height:3px;background:#c4c4c4"></div>
<svg class="a" style="left:1906px;top:286px" width="14" height="60" viewBox="0 0 14 60">
<defs><linearGradient id="th" x1="0" y1="0" x2="0" y2="1"><stop offset="0" stop-color="#6b7682"/><stop offset="0.36" stop-color="#5f7688"/><stop offset="0.5" stop-color="#3f9ad2"/><stop offset="1" stop-color="#38b2ec"/></linearGradient></defs>
<path d="M5.3 5.5 A2.7 2.7 0 0 1 10.7 5.5 V46.5 A5.6 5.6 0 1 1 5.3 46.5 Z" fill="url(#th)" stroke="#34566c" stroke-width="1.3"/>
</svg>
</body></html>
